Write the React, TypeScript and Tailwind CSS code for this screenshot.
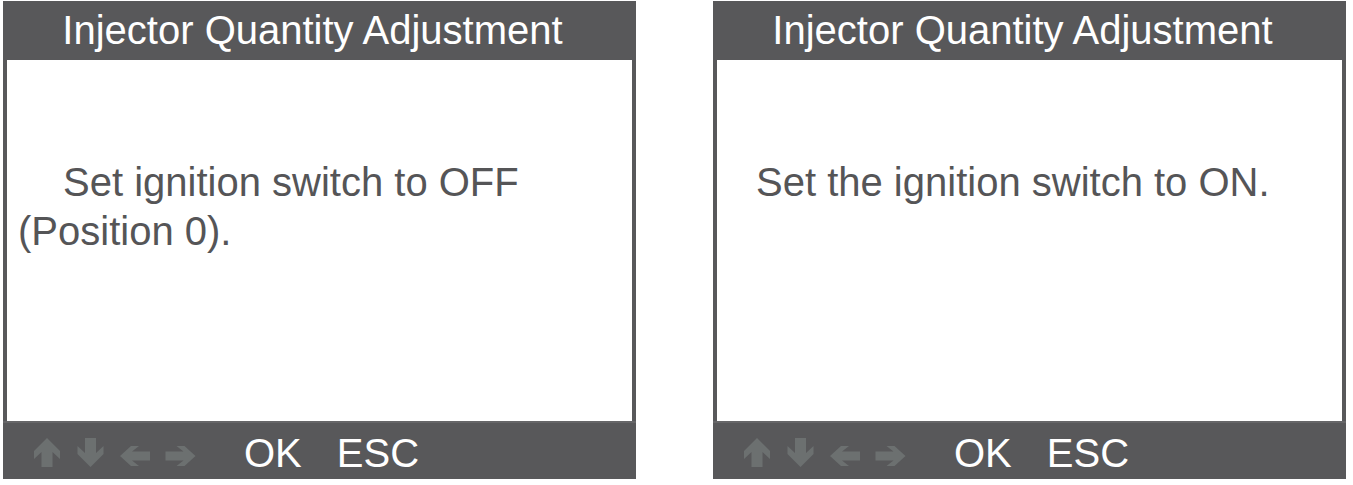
import React from 'react'

// Handheld scan-tool screens, two side by side
const FONT = { fontFamily: '"Liberation Sans", Arial, Helvetica, sans-serif' }

function UpArrow() {
  return (
    <svg width="26" height="29" viewBox="0 0 26 29" className="fill-[#6c7070]">
      <polygon points="13,0 26,13 26,21 18.5,14 18.5,29 7.5,29 7.5,14 0,21 0,13" />
    </svg>
  )
}

function DownArrow() {
  return (
    <svg width="27" height="29" viewBox="0 0 26 29" className="fill-[#6c7070]">
      <polygon points="13,29 26,16 26,8 18.5,15 18.5,0 7.5,0 7.5,15 0,8 0,16" />
    </svg>
  )
}

function LeftArrow() {
  return (
    <svg width="30" height="20" viewBox="0 0 30 20" className="fill-[#6c7070]">
      <polygon points="0,10 11,0 19,0 12,5.5 30,5.5 30,14.5 12,14.5 19,20 11,20" />
    </svg>
  )
}

function RightArrow() {
  return (
    <svg width="31" height="20" viewBox="0 0 30 20" className="fill-[#6c7070]">
      <polygon points="30,10 19,0 11,0 18,5.5 0,5.5 0,14.5 18,14.5 11,20 19,20" />
    </svg>
  )
}

function Screen({ children }: { children: React.ReactNode }) {
  return (
    <div className="flex flex-col w-[633px] h-[478px] bg-[#58585a]">
      {/* ── Title bar ── */}
      <div className="h-[59px] flex items-center justify-center pr-[14px] pb-[2px] text-white text-[40px] leading-none">
        Injector Quantity Adjustment
      </div>

      {/* ── Message area ── */}
      <div className="mx-[4px] h-[361px] bg-white text-[#555557] text-[40px] leading-[49px]">
        {children}
      </div>

      {/* ── Key bar ── */}
      <div className="h-[58px] border-t-2 border-[#666668] flex items-center pt-[3px] pl-[31px] text-white text-[40px] leading-none">
        <div className="flex items-center h-[29px]">
          <UpArrow />
          <div className="ml-[17px]"><DownArrow /></div>
          <div className="ml-[16px] self-end mb-[1px]"><LeftArrow /></div>
          <div className="ml-[15px] self-end mb-[1px]"><RightArrow /></div>
        </div>
        <span className="ml-[48px]">OK</span>
        <span className="ml-[35px]">ESC</span>
      </div>
    </div>
  )
}

export default function App() {
  return (
    <div className="w-[1353px] h-[485px] bg-white flex gap-[77px] pl-[3px] pt-[1px]" style={FONT}>
      <Screen>
        <p className="pt-[98px] pl-[11px] indent-[45px]">
          Set ignition switch to OFF
          <br />
          (Position 0).
        </p>
      </Screen>
      <Screen>
        <p className="pt-[98px] pl-[39px]">Set the ignition switch to ON.</p>
      </Screen>
    </div>
  )
}
